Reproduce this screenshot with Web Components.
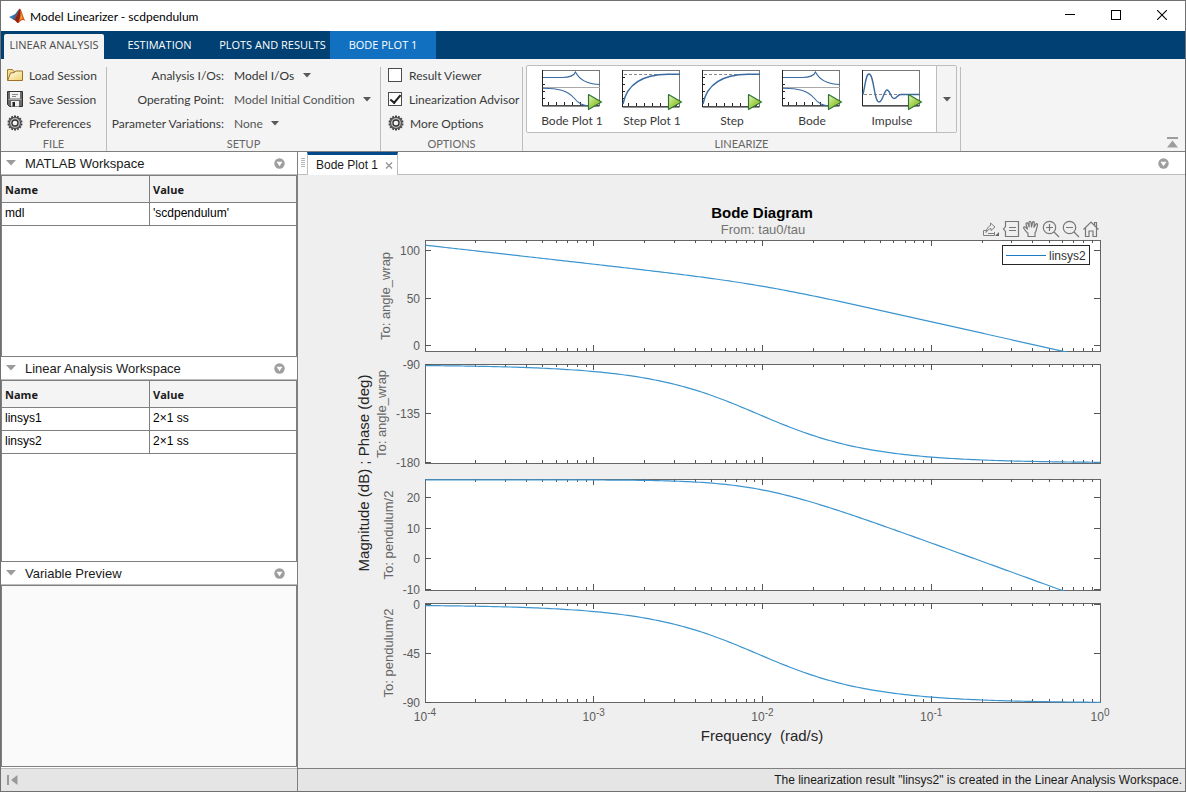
<!DOCTYPE html>
<html lang="en">
<head>
<meta charset="utf-8">
<title>Model Linearizer - scdpendulum</title>
<style>
html, body { margin: 0; height: 100%; }
body { font: 12px "Liberation Sans", Arial, sans-serif; color: #1a1a1a; --line: #7f7f7f; --navy: #004073; --ui: Lato, "Open Sans", sans-serif; }
</style>
</head>
<body>
<linearizer-app></linearizer-app>

<script>
function define(name, css, html, setup) {
  const template = document.createElement('template');
  template.innerHTML = `<style>*{box-sizing:border-box}button{font:inherit;color:inherit;background:none;border:0;padding:0;margin:0}svg{display:block}${css}</style>${html}`;
  customElements.define(name, class extends HTMLElement {
    connectedCallback() {
      if (this.shadowRoot) return;
      this.attachShadow({ mode: 'open' }).append(template.content.cloneNode(true));
      if (setup) setup.call(this, this.shadowRoot);
    }
  });
}

const teeth = Array.from({ length: 14 }, (_, i) =>
  `<rect x="7" y="0.5" width="2" height="2.500" fill="#444" transform="rotate(${i * 360 / 14} 8 8)"/>`).join('');

function plotTicks(bottom) {
  let d = '';
  for (let x = 8; x < 58; x += 8) d += `M${x + .5} ${bottom}v-3`;
  for (let y = 9; y < bottom - 2; y += 7) d += `M3 ${y + .5}h2`;
  return `<path d="${d}" stroke="#222" fill="none"/>`;
}
function plotIcon(bottom, curves, ticks = plotTicks(bottom)) {
  return [64, 44, `<rect x="2.500" y="2.500" width="57" height="${bottom - 2}" fill="#fff" stroke="#777"/>
    <path d="M2.500 2v${bottom - 1}h57" fill="none" stroke="#222"/>${ticks}
    <g fill="none" stroke="#3a6aa0" stroke-width="1.100">${curves}</g>
    <defs><linearGradient id="g" x1="0" y1="0" x2="1" y2="1"><stop offset="0" stop-color="#eaf7c4"/><stop offset=".5" stop-color="#a6d04c"/><stop offset="1" stop-color="#7db52c"/></linearGradient></defs>
    <path d="M48.500 26.500L61.500 34L48.500 41.500z" fill="url(#g)" stroke="#2f7436" stroke-width="1.200" stroke-linejoin="round"/>`];
}
const bodeCurves = '<path d="M3 9.500H22C30 9.500 34 8 35.500 4C38 9 43 16 60 16.500"/><path d="M3 19.500H60" stroke="#aaa"/><path d="M3 20.300C18 20.500 27 22 34 30C39 36 42 37.500 50 38"/>';
const stepCurves = '<path d="M4 6.500H60" stroke="#888" stroke-dasharray="3 2" stroke-width="1"/><path d="M3 36C7 16 22 6.500 48 6.300H60" stroke-width="1.400"/>';

const icons = {
  matlab: [17, 16, '<path d="M0 9L5.500 6.500L8 8.500L5 12z" fill="#3f7fb5"/><path d="M5 7C8 5 8.500 1.500 11 1L8 9L5 12L3.500 10.500z" fill="#356a9c"/><path d="M11 .5C9 3 8 8 5 12C7 11.500 8 15.500 9.500 15C11.500 14 12 10 16.500 13C14 9 13 3 11 .5z" fill="#d9541e"/><path d="M11 .5C12.500 5 11 11 9 15C7.500 15 7 12 5 12C8 9 9 3 11 .5z" fill="#8c2412"/><path d="M11.300 2C12.500 6 13 9 14 11C12 10 11 12 10 13.500C12 9 12 6 11.300 2z" fill="#f6a02c"/>'],
  folder: [16, 16, '<defs><linearGradient id="f" x1="0" y1="0" x2="1" y2="1"><stop offset="0" stop-color="#fffef2"/><stop offset="1" stop-color="#f0cf66"/></linearGradient></defs><path d="M.5 13.500V2.500H5.500L7 4.500H11.500V7" fill="#f1dc97" stroke="#a87b24"/><path d="M.7 13.500L3.500 6L7.500 5.500L8.500 4H15.500V13.500z" fill="url(#f)" stroke="#9c7128"/>'],
  save: [16, 16, '<path d="M.5 .5H15.500V15.500H2.500L.5 13.500z" fill="#6a6a6a" stroke="#333"/><rect x="3" y="1" width="10" height="6.500" fill="#f2f2f2"/><path d="M5 3.500h6M5 5.500h4" stroke="#888"/><rect x="4" y="10" width="8" height="5.500" fill="#eee"/><rect x="5.500" y="11" width="2.500" height="4.500" fill="#222"/><path d="M1.500 8.500h13" stroke="#aaa"/>'],
  gear: [16, 16, teeth + '<circle cx="8" cy="8" r="5.600" fill="#bbb" stroke="#555" stroke-width="1.300"/><circle cx="8" cy="8" r="3" fill="#f4f4f4" stroke="#333" stroke-width="1.300"/>'],
  bode: plotIcon(37, bodeCurves),
  step: plotIcon(38, stepCurves),
  impulse: plotIcon(37, '<path d="M4 26.500H60" stroke="#888" stroke-dasharray="3 2" stroke-width="1"/><path d="M3 26.500C5 18 6 6 9 6C14 6 14 34 19 34C23 34 24 22 27 22C30 22 31 30.500 34 30.500C37 30.500 37 26.500 41 26.500H60" stroke-width="1.400"/>', ''),
  menu: [11, 11, '<circle cx="5.500" cy="5.500" r="5.200" fill="#9e9e9e"/><path d="M2.500 3.800h6L5.500 8.300z" fill="#fff"/>'],
  down: [10, 6, '<path d="M0 0H10L5 5.500z" fill="#9b9b9b"/>'],
  caret: [8, 5, '<path d="M0 0H8L4 4.500z" fill="#595959"/>'],
  collapse: [11, 11, '<path d="M0 0h11v2H0zM5.500 3.500L11 10.500H0z" fill="#9d9d9d"/>'],
  first: [11, 11, '<path d="M0 0h2v10H0zM10.500 0v10L4 5z" fill="#999"/>'],
  close: [8, 8, '<path d="M1 1.500L7 7.500M7 1.500L1 7.500" stroke="#9a9a9a" stroke-width="1.500"/>'],
  winmin: [10, 10, '<path d="M0 4.500H10" stroke="#000"/>'],
  winmax: [10, 10, '<rect x=".5" y=".5" width="9" height="9" fill="none" stroke="#000"/>'],
  winclose: [10, 10, '<path d="M0 0L10 10M10 0L0 10" stroke="#000" stroke-width="1.100"/>'],
  export: [18, 18, '<g fill="none" stroke="#808080" stroke-width="1"><path d="M4.500 10.500H1.500V15.500H12.500V12"/><path d="M4 12.500C4.500 9 6 6.500 8.500 5.500V3L13 7L9 10.500V8.500C6.500 9 5.500 10.500 4 12.500zM6 13.500H12"/></g><path d="M17 12v4h-4z" fill="#666"/>'],
  datatip: [18, 18, '<path d="M3.500 1.500H16.500V16.500H3.500V11.500L1.500 9L3.500 6.500z" fill="none" stroke="#777" stroke-width="1.200"/><path d="M7 7.500h7M7 10.500h7" stroke="#777" stroke-width="1.200"/>'],
  pan: [18, 18, '<path d="M5.500 13C4 11 2.500 9.500 1.500 8C1.500 6.500 3 6.500 4 7.500L5.500 9L4 4C4 2.500 5.500 2.500 6 3.500L7.200 7L7 2.500C7.200 1 8.800 1 9 2.500L9.500 7L10.500 2.500C11 1.200 12.300 1.500 12.300 3L12 7.300L13.800 4.200C14.700 3.200 15.800 4 15.500 5.200L14 11L13 13V16.500H6V13z" fill="none" stroke="#777" stroke-width="1.200" stroke-linejoin="round"/>'],
  zoomin: [18, 18, '<g fill="none" stroke="#777" stroke-width="1.200"><circle cx="7.500" cy="7.500" r="6.200"/><path d="M12 12L17 17M4 7.500h7M7.500 4v7"/></g>'],
  zoomout: [18, 18, '<g fill="none" stroke="#777" stroke-width="1.200"><circle cx="7.500" cy="7.500" r="6.200"/><path d="M12 12L17 17M4 7.500h7"/></g>'],
  home: [18, 18, '<path d="M1.500 9.500L9 2L16.500 9.500M3.500 8V16.500H7V11H11V16.500H14.500V8M12.500 5V2.500H14.500V7" fill="none" stroke="#777" stroke-width="1.200"/>']
};

define('ui-icon', ':host{display:block;flex:none}', '', function (root) {
  const [w, h, body] = icons[this.getAttribute('name')];
  root.innerHTML += `<svg width="${w}" height="${h}" viewBox="0 0 ${w} ${h}" aria-hidden="true">${body}</svg>`;
});

define('title-bar', `
  :host{display:flex;align-items:center;height:30px;background:#fff;padding-left:8px;font-family:var(--ui);color:#000}
  h1{font:inherit;margin:0 0 0 4px;flex:1}
  button{width:46px;height:30px;padding-bottom:2px;display:grid;place-items:center}`, `
  <ui-icon name="matlab"></ui-icon><h1><slot></slot></h1>
  <button aria-label="Minimize"><ui-icon name="winmin"></ui-icon></button>
  <button aria-label="Maximize"><ui-icon name="winmax"></ui-icon></button>
  <button aria-label="Close"><ui-icon name="winclose"></ui-icon></button>`);

define('ribbon-tabs', `
  :host{display:flex;height:28px;background:var(--navy);padding-left:3px;font:11px "Open Sans","Noto Sans",sans-serif;color:#fff;align-items:stretch}
  button{white-space:nowrap;padding-bottom:1px}
  .active{width:100px;margin-top:3px;padding-bottom:4px;background:#f4f4f4;color:#4a4a4a;border-radius:2px 2px 0 0}
  .est{width:111px}.plots{width:115px}.bode{width:106px;background:#1170bf}`, `
  <button class="active">LINEAR ANALYSIS</button><button class="est">ESTIMATION</button>
  <button class="plots">PLOTS AND RESULTS</button><button class="bode">BODE PLOT 1</button>`);

define('ribbon-group', `
  :host{display:flex;flex:none}
  section{display:flex;flex-direction:column;flex:1;padding-top:4px}
  .rows{height:73px}
  h2{font:inherit;font-size:11px;line-height:15px;margin:0;text-align:center;color:#666}
  i{width:1px;margin-top:8px;background:#bdbdbd}`,
  '<section><div class="rows"><slot></slot></div><h2></h2></section><i></i>',
  function (root) {
    root.querySelector('h2').textContent = this.getAttribute('label');
  });

define('ribbon-button', `
  :host{display:block;height:24px}
  button{display:flex;align-items:center;gap:6px;height:24px;white-space:nowrap}`,
  '<button><slot></slot></button>',
  function (root) {
    const icon = document.createElement('ui-icon');
    icon.setAttribute('name', this.getAttribute('icon'));
    root.querySelector('button').prepend(icon);
  });

define('ribbon-check', `
  :host{display:block;height:24px}
  label{display:flex;align-items:center;gap:7px;height:24px;white-space:nowrap}
  input{appearance:none;width:14px;height:14px;margin:0;background:#fff;border:1px solid #4c4c4c;display:grid;place-items:center}
  input:checked::before{content:"";width:9px;height:4px;border:solid #222;border-width:0 0 2px 2px;transform:translateY(-1px) rotate(-50deg)}`,
  '<label><input type="checkbox"><slot></slot></label>',
  function (root) { root.querySelector('input').checked = this.hasAttribute('checked'); });

define('setup-form', `
  :host{display:grid;grid-template-columns:117px 1fr;column-gap:10px;grid-auto-rows:24px;align-items:center;white-space:nowrap}
  label{text-align:right}
  .pick{display:flex;align-items:center;gap:8px}
  select{appearance:none;border:0;background:none;font:inherit;color:#555;padding:0;margin:0}
  .dark{color:#333}`, `
  <label for="io">Analysis I/Os:</label><span class="pick"><select id="io" class="dark"><option>Model I/Os</option></select><ui-icon name="caret"></ui-icon></span>
  <label for="op">Operating Point:</label><span class="pick"><select id="op"><option>Model Initial Condition</option></select><ui-icon name="caret"></ui-icon></span>
  <label for="pv">Parameter Variations:</label><span class="pick"><select id="pv"><option>None</option></select><ui-icon name="caret"></ui-icon></span>`);

define('plot-gallery', `
  :host{display:flex;height:68px;border:1px solid #bdbdbd;border-radius:2px;margin:2px 3px 0 3px;background:#fff}
  .items{display:flex;flex:1;padding-left:5px}
  .items button{width:80px;display:flex;flex-direction:column;align-items:center;padding-top:2px;line-height:18px;white-space:nowrap}
  .more{width:20px;background:#f4f4f4;border-left:1px solid #bdbdbd;display:grid;place-items:center}`, `
  <div class="items">
    <button><ui-icon name="bode"></ui-icon>Bode Plot 1</button>
    <button><ui-icon name="step"></ui-icon>Step Plot 1</button>
    <button><ui-icon name="step"></ui-icon>Step</button>
    <button><ui-icon name="bode"></ui-icon>Bode</button>
    <button><ui-icon name="impulse"></ui-icon>Impulse</button>
  </div>
  <button class="more" aria-label="More plots"><ui-icon name="caret"></ui-icon></button>`);

define('tool-ribbon', `
  :host{display:flex;height:93px;background:#f4f4f4;border-bottom:1px solid var(--line);font-family:var(--ui);color:#3a3a3a}
  .file{width:106px}.setup{width:274px}.options{width:142px}.linearize{width:438px}
  .pad{padding-left:6px}
  .options .pad{padding-left:7px}
  .collapse{margin:auto 7px 3px auto}`, `
  <ribbon-group class="file" label="FILE"><div class="pad">
    <ribbon-button icon="folder">Load Session</ribbon-button>
    <ribbon-button icon="save">Save Session</ribbon-button>
    <ribbon-button icon="gear">Preferences</ribbon-button></div></ribbon-group>
  <ribbon-group class="setup" label="SETUP"><setup-form></setup-form></ribbon-group>
  <ribbon-group class="options" label="OPTIONS"><div class="pad">
    <ribbon-check>Result Viewer</ribbon-check>
    <ribbon-check checked>Linearization Advisor</ribbon-check>
    <ribbon-button icon="gear">More Options</ribbon-button></div></ribbon-group>
  <ribbon-group class="linearize" label="LINEARIZE"><plot-gallery></plot-gallery></ribbon-group>
  <button class="collapse" aria-label="Collapse ribbon"><ui-icon name="collapse"></ui-icon></button>`);

define('workspace-panel', `
  :host{display:flex;flex-direction:column;flex:1;min-height:0}
  header{display:flex;align-items:center;height:23px;flex:none;background:#fff;border-bottom:1px solid #bdbdbd;padding:0 12px 0 5px}
  h2{font:13px "Liberation Sans",Arial,sans-serif;margin:0 0 0 9px;flex:1}
  .box{flex:1;min-height:0;border:1px solid var(--line);background:var(--panel-fill,#fff);overflow:hidden}`, `
  <header><button aria-label="Collapse panel"><ui-icon name="down"></ui-icon></button><h2></h2>
  <button aria-label="Panel menu"><ui-icon name="menu"></ui-icon></button></header><div class="box"><slot></slot></div>`,
  function (root) { root.querySelector('h2').textContent = this.getAttribute('heading'); });

define('variable-table', `
  :host{display:block}
  table{width:100%;border-collapse:separate;border-spacing:0;table-layout:fixed}
  th,td{text-align:left;padding:0 3px;border-bottom:1px solid var(--line)}
  th:first-child,td:first-child{border-right:1px solid var(--line);width:148px}
  th{height:27px;background:#f4f4f4;font:bold 11px "Open Sans","Noto Sans",sans-serif}
  td{height:23px;padding-bottom:2px;color:#000}`,
  '<table><thead><tr><th>Name</th><th>Value</th></tr></thead><tbody></tbody></table>',
  function (root) {
    const body = root.querySelector('tbody');
    for (const row of JSON.parse(this.getAttribute('rows'))) {
      const tr = body.insertRow();
      for (const cell of row) tr.insertCell().textContent = cell;
    }
  });

define('document-tabs', `
  :host{display:flex;height:23px;flex:none;background:#fff}
  .grip{width:9px;border-bottom:1px solid #bdbdbd;padding:6px 2px 0 3px}
  .grip::before{content:"";display:block;height:10px;background:repeating-linear-gradient(#b5b5b5 0 1px,#fff 1px 2px)}
  .tab{display:flex;align-items:center;gap:7px;border:1px solid #bdbdbd;border-top:3px solid #00498a;border-bottom:0;padding:0 4px 0 8px}
  .rest{flex:1;border-bottom:1px solid #bdbdbd;display:flex;justify-content:flex-end;align-items:center;padding-right:16px}`, `
  <div class="grip"></div>
  <div class="tab"><span>Bode Plot 1</span><button aria-label="Close tab"><ui-icon name="close"></ui-icon></button></div>
  <div class="rest"><button aria-label="Document menu"><ui-icon name="menu"></ui-icon></button></div>`);

define('bode-figure', `
  :host{display:grid;flex:1;min-height:0;background:#efefef}
  svg.chart{grid-area:1/1;width:100%;height:100%;font-family:"Liberation Sans",Arial,sans-serif}
  .tools{grid-area:1/1;justify-self:end;align-self:start;display:flex;margin:44px 84px 0 0}
  .tools button{width:20px;height:20px;display:grid;place-items:center}`, `
  <svg class="chart" viewBox="0 0 887 593" role="img" aria-label="Bode Diagram"></svg>
  <div class="tools">
    <button aria-label="Export"><ui-icon name="export"></ui-icon></button>
    <button aria-label="Data tips"><ui-icon name="datatip"></ui-icon></button>
    <button aria-label="Pan"><ui-icon name="pan"></ui-icon></button>
    <button aria-label="Zoom in"><ui-icon name="zoomin"></ui-icon></button>
    <button aria-label="Zoom out"><ui-icon name="zoomout"></ui-icon></button>
    <button aria-label="Restore view"><ui-icon name="home"></ui-icon></button>
  </div>`,
  function (root) {
    const left = 127, right = 802, decade = (right - left) / 4, corner = 0.0093;
    const lag = w => Math.atan(w / corner) * 180 / Math.PI;
    const roll = w => 10 * Math.log10(1 + (w / corner) ** 2);
    const axes = [
      { top: 65, bottom: 176, hi: [100, 75], lo: [0, 170], ticks: [100, 50, 0], name: 'To: angle_wrap', at: [92, 121], f: w => 26 - 20 * Math.log10(w) - roll(w) },
      { top: 189, bottom: 288, hi: [-90, 189], lo: [-180, 287], ticks: [-90, -135, -180], name: 'To: angle_wrap', at: [88, 239], f: w => -90 - lag(w) },
      { top: 304, bottom: 415, hi: [20, 322], lo: [-10, 414], ticks: [20, 10, 0, -10], name: 'To: pendulum/2', at: [95, 360], f: w => 25.9 - roll(w) },
      { top: 428, bottom: 527, hi: [0, 429], lo: [-90, 527], ticks: [0, -45, -90], name: 'To: pendulum/2', at: [95, 478], f: w => -lag(w) }
    ];
    let out = '';
    axes.forEach((a, n) => {
      const y = v => a.hi[1] + (a.hi[0] - v) * (a.lo[1] - a.hi[1]) / (a.hi[0] - a.lo[0]);
      let marks = '', line = '';
      for (let d = 0; d < 4; d++) for (let k = 1; k < 10; k++) {
        if (!d && k === 1) continue;
        const x = Math.floor(left + decade * (d + Math.log10(k))) + .5, len = k === 1 ? 6 : 3;
        marks += `M${x} ${a.top}v${len}M${x} ${a.bottom}v-${len}`;
      }
      for (const t of a.ticks) {
        const ty = Math.round(y(t));
        marks += `M${left} ${ty + .5}h6M${right} ${ty + .5}h-6`;
        out += `<text x="122" y="${ty + 5}" font-size="12" fill="#5c5c5c" text-anchor="end">${t}</text>`;
      }
      for (let i = 0; i <= 200; i++) line += `${i ? 'L' : 'M'}${(left + .5 + i * (right - left) / 200).toFixed(2)} ${(y(a.f(10 ** (i / 50 - 4))) + .9).toFixed(2)}`;
      out += `<rect x="${left + .5}" y="${a.top + .5}" width="${right - left}" height="${a.bottom - a.top}" fill="#fff" stroke="#666"/>
        <path d="${marks}" stroke="#555"/>
        <clipPath id="c${n}"><rect x="${left}" y="${a.top - 1}" width="${right - left + 1}" height="${a.bottom - a.top + 2}"/></clipPath>
        <g clip-path="url(#c${n})"><path d="${line}" fill="none" stroke="#3d95cf" stroke-width="1.200"/></g>
        <text transform="translate(${a.at}) rotate(-90)" font-size="13" fill="#666" text-anchor="middle">${a.name}</text>`;
    });
    for (let e = -4; e <= 0; e++)
      out += `<text x="${left + decade * (e + 4)}" y="546" font-size="12" fill="#5c5c5c" text-anchor="middle">10<tspan dy="-5" font-size="10">${e}</tspan></text>`;
    out += `<text x="464" y="43" font-size="15" font-weight="bold" fill="#000" text-anchor="middle">Bode Diagram</text>
      <text x="465" y="59" font-size="13" fill="#737373" text-anchor="middle">From: tau0/tau</text>
      <text x="464" y="566" font-size="15" fill="#262626" text-anchor="middle" style="white-space:pre">Frequency  (rad/s)</text>
      <text transform="translate(71 298) rotate(-90)" font-size="15" fill="#262626" text-anchor="middle">Magnitude (dB) ; Phase (deg)</text>
      <rect x="704.5" y="70.5" width="87" height="19" fill="#fff" stroke="#262626"/>
      <path d="M708 80.5h40" stroke="#1a7cc4"/><text x="751" y="85" font-size="12" fill="#333">linsys2</text>`;
    root.querySelector('svg').innerHTML = out;
  });

define('status-bar', `
  :host{display:flex;align-items:center;height:23px;flex:none;background:#e5e5e5;border-top:1px solid var(--edge,#7f7f7f);white-space:nowrap}`,
  '<slot></slot>');

define('linearizer-app', `
  :host{display:flex;flex-direction:column;min-height:100vh;border:1px solid #707070;box-sizing:border-box}
  main{display:flex;flex:1;min-height:0}
  aside{display:flex;flex-direction:column;width:297px;flex:none;border-right:1px solid var(--line);background:#fff}
  .panels{display:flex;flex-direction:column;flex:1;padding-bottom:1px}
  .doc{display:flex;flex-direction:column;flex:1;min-width:0}
  .preview{--panel-fill:#fafafa}
  .left{--edge:#bdbdbd;padding-left:6px}
  .right{justify-content:flex-end;padding-right:3px}`, `
  <title-bar>Model Linearizer - scdpendulum</title-bar>
  <ribbon-tabs></ribbon-tabs>
  <tool-ribbon></tool-ribbon>
  <main>
    <aside>
      <div class="panels">
        <workspace-panel heading="MATLAB Workspace"><variable-table rows='[["mdl","&#39;scdpendulum&#39;"]]'></variable-table></workspace-panel>
        <workspace-panel heading="Linear Analysis Workspace"><variable-table rows='[["linsys1","2×1 ss"],["linsys2","2×1 ss"]]'></variable-table></workspace-panel>
        <workspace-panel class="preview" heading="Variable Preview"></workspace-panel>
      </div>
      <status-bar class="left"><button aria-label="Collapse side panel"><ui-icon name="first"></ui-icon></button></status-bar>
    </aside>
    <div class="doc">
      <document-tabs></document-tabs>
      <bode-figure></bode-figure>
      <status-bar class="right">The linearization result "linsys2" is created in the Linear Analysis Workspace.</status-bar>
    </div>
  </main>`);
</script>
</body>
</html>
